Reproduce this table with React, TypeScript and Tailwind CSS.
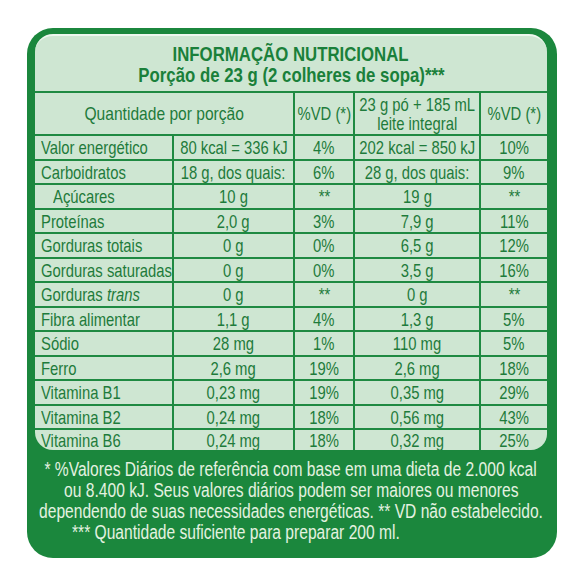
import React from 'react'

const rows = [
    ['Valor energético', '80 kcal = 336 kJ', '4%', '202 kcal = 850 kJ', '10%'],
    ['Carboidratos', '18 g, dos quais:', '6%', '28 g, dos quais:', '9%'],
    ['Açúcares', '10 g', '**', '19 g', '**'],
    ['Proteínas', '2,0 g', '3%', '7,9 g', '11%'],
    ['Gorduras totais', '0 g', '0%', '6,5 g', '12%'],
    ['Gorduras saturadas', '0 g', '0%', '3,5 g', '16%'],
    ['Gorduras trans', '0 g', '**', '0 g', '**'],
    ['Fibra alimentar', '1,1 g', '4%', '1,3 g', '5%'],
    ['Sódio', '28 mg', '1%', '110 mg', '5%'],
    ['Ferro', '2,6 mg', '19%', '2,6 mg', '18%'],
    ['Vitamina B1', '0,23 mg', '19%', '0,35 mg', '29%'],
    ['Vitamina B2', '0,24 mg', '18%', '0,56 mg', '43%'],
    ['Vitamina B6', '0,24 mg', '18%', '0,32 mg', '25%'],
]

// condensed look: Liberation Sans squeezed horizontally
const N = ({ children, left, wide }: { children: React.ReactNode; left?: boolean; wide?: boolean }) => (
    <span className={`inline-block whitespace-nowrap ${wide ? 'scale-x-[0.82]' : 'scale-x-[0.78]'} ${left ? 'origin-left' : 'origin-center'}`}>{children}</span>
)

const line = 'border-[#1f8a42]'
const cell = `border-t-2 border-l-2 ${line} flex items-center justify-center leading-none`

const App = () => {
    return (
        <div className="w-[586px] h-[588px] bg-white pt-[28px] pl-[27px] font-[family-name:Liberation_Sans,Arial,sans-serif] text-[#1e7b3b]">
            <div className="w-[530px] h-[530px] bg-[#1b873d] rounded-[26px] pt-[6px] pl-[8px] pr-[10px] flex flex-col">
                <div className="h-[416px] bg-[#cee6d2] rounded-[18px] rounded-br-[16px] border-t-2 border-[#eef7ef] overflow-hidden flex flex-col">
                    <div className="h-[55px] flex flex-col items-center pt-[7px] font-bold text-[21px] leading-[21px] text-[#1a803a]">
                        <span className="inline-block whitespace-nowrap scale-x-[0.8]">INFORMAÇÃO NUTRICIONAL</span>
                        <span className="inline-block whitespace-nowrap scale-x-[0.8]">Porção de 23 g (2 colheres de sopa)***</span>
                    </div>

                    <div className="flex-1 grid grid-cols-[137px_121px_60px_126px_68px] grid-rows-[43px_25px_24px_25px_24px_25px_24px_25px_24px_25px_24px_25px_24px_1fr] text-[19px]">
                        <div className={`border-t-2 ${line} col-span-2 flex items-center justify-center leading-none`}><N wide>Quantidade por porção</N></div>
                        <div className={cell}><N>%VD (*)</N></div>
                        <div className={`${cell} flex-col leading-[18px]`}>
                            <N>23 g pó + 185 mL</N>
                            <N>leite integral</N>
                        </div>
                        <div className={cell}><N>%VD (*)</N></div>

                        {rows.map((r, i) => (
                            <React.Fragment key={i}>
                                <div className={`border-t-2 ${line} flex items-center leading-none ${i === 2 ? 'pl-[18px]' : 'pl-[6px]'}`}>
                                    <N left>{r[0] === 'Gorduras trans' ? <>Gorduras <i>trans</i></> : r[0]}</N>
                                </div>
                                <div className={cell}><N>{r[1]}</N></div>
                                <div className={cell}><N>{r[2]}</N></div>
                                <div className={cell}><N>{r[3]}</N></div>
                                <div className={cell}><N>{r[4]}</N></div>
                            </React.Fragment>
                        ))}
                    </div>
                </div>

                <div className="pt-[9px] text-[20px] leading-[21px] text-[#e4f2e0]">
                    <div className="flex justify-center"><N>* %Valores Diários de referência com base em uma dieta de 2.000 kcal</N></div>
                    <div className="flex justify-center"><N>ou 8.400 kJ. Seus valores diários podem ser maiores ou menores</N></div>
                    <div className="flex justify-center"><N>dependendo de suas necessidades energéticas. ** VD não estabelecido.</N></div>
                    <div className="pl-[37px]"><N left>*** Quantidade suficiente para preparar 200 ml.</N></div>
                </div>
            </div>
        </div>
    )
}

export default App
